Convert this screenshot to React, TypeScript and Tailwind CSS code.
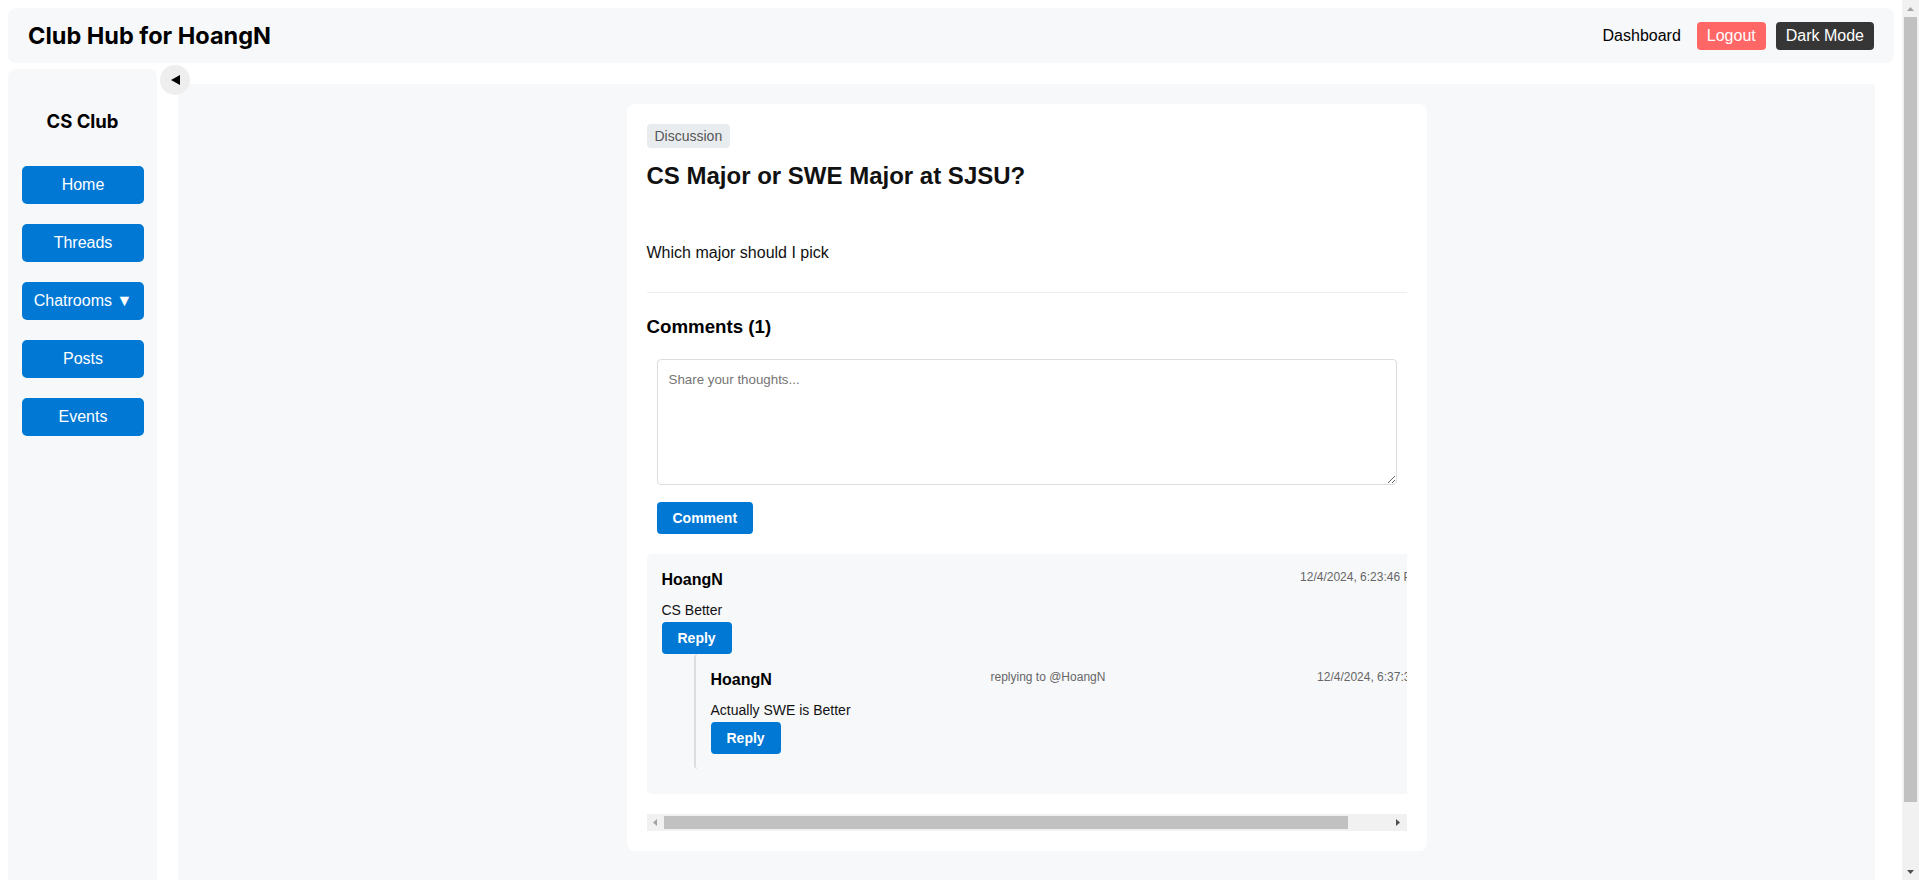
function Arrow({ dir, color }: { dir: "up" | "down" | "left" | "right"; color: string }) {
  const pts: Record<string, string> = {
    up: "0,4 3.5,0 7,4",
    down: "0,0 7,0 3.5,4",
    left: "4,0 4,7 0,3.5",
    right: "0,0 0,7 4,3.5",
  };
  const vertical = dir === "up" || dir === "down";
  return (
    <svg width={vertical ? 7 : 4} height={vertical ? 4 : 7} viewBox={vertical ? "0 0 7 4" : "0 0 4 7"}>
      <polygon points={pts[dir]} fill={color} />
    </svg>
  );
}

export default function App() {
  const navItems = ["Home", "Threads", "Chatrooms ▼", "Posts", "Events"];
  return (
    <div className="flex h-screen overflow-hidden bg-white font-['Liberation_Sans',Arial,sans-serif] text-black">
      <div className="min-w-0 flex-1 p-2">
        <header className="flex h-[55px] items-center justify-between rounded-lg bg-[#f7f8fa] px-5">
          <h1 className="font-['Inter',sans-serif] text-[23.5px] font-bold leading-[29px]">Club Hub for HoangN</h1>
          <div className="flex items-center">
            <a className="mr-4 text-[16px] leading-[18px]">Dashboard</a>
            <button className="h-[28px] rounded-[4px] bg-[#ff6666] px-[10px] text-[16px] text-white">Logout</button>
            <button className="ml-[10px] h-[28px] rounded-[4px] bg-[#363636] px-[10px] text-[16px] text-white">
              Dark Mode
            </button>
          </div>
        </header>

        <div className="relative mt-[6px] flex min-h-[871px]">
          <aside className="w-[149px] shrink-0 rounded-lg bg-[#f7f8fa] pt-[41px]">
            <h2 className="text-center font-['Inter',sans-serif] text-[18.5px] font-bold leading-[22px]">CS Club</h2>
            <nav className="mt-[34px] flex flex-col gap-5 px-[14px]">
              {navItems.map((n) => (
                <button
                  key={n}
                  className="h-[38px] w-[122px] rounded-[5px] bg-[#0078d4] text-center text-[16px] text-white"
                >
                  {n}
                </button>
              ))}
            </nav>
          </aside>

          <button className="absolute left-[152px] top-[-4px] flex h-[30px] w-[30px] items-center justify-center rounded-full bg-[#eeeeee]">
            <svg width="9" height="10" viewBox="0 0 9 10">
              <polygon points="0,5 9,0 9,10" fill="#000" />
            </svg>
          </button>

          <main className="ml-[21px] mr-[19px] mt-[15px] min-w-0 flex-1 bg-[#f7f8fa] pt-5">
            <article className="mx-auto w-[800px] rounded-lg bg-white p-5">
              <span className="inline-block rounded-[4px] bg-[#e9ecef] px-2 py-1 text-[14px] leading-4 text-[#555]">
                Discussion
              </span>
              <h2 className="mt-[14px] text-[24px] font-bold leading-[28px] text-[#111]">
                CS Major or SWE Major at SJSU?
              </h2>
              <p className="mt-[54px] text-[16px] leading-[18px] text-[#111]">Which major should I pick</p>
              <div className="mt-[30px] h-px bg-[#eeeeee]" />
              <h3 className="mb-[11px] mt-[23px] text-[18.72px] font-bold leading-[22px]">Comments (1)</h3>

              <div className="p-[10px]">
                <textarea
                  placeholder="Share your thoughts..."
                  className="block h-[126px] w-full rounded-[4px] border border-[#dddddd] bg-white px-[11px] pb-[10px] pt-[12px] text-[13.33px] leading-[15px] placeholder:text-[#757575]"
                />
                <button className="mt-[17px] h-8 rounded-[4px] bg-[#0078d4] px-4 text-[14px] font-bold text-white">
                  Comment
                </button>
              </div>

              <div className="mt-[10px]">
                <div className="overflow-hidden">
                  <div className="mb-5 box-content w-full rounded-[5px] bg-[#f7f8fa] p-[15px]">
                    <div className="mb-[15px] flex h-[18px] items-start justify-between">
                      <span className="pt-[2px] text-[16px] font-bold leading-[18px]">HoangN</span>
                      <span className="mt-px whitespace-nowrap text-[12px] leading-[14px] text-[#666]">
                        12/4/2024, 6:23:46 PM
                      </span>
                    </div>
                    <p className="mb-[4px] text-[14px] leading-4 text-[#111]">CS Better</p>
                    <button className="h-8 rounded-[4px] bg-[#0078d4] px-4 text-[14px] font-bold text-white">
                      Reply
                    </button>

                    <div className="mb-[10px] ml-8 w-full rounded-[4px] border-l-2 border-[#dddddd] p-[15px]">
                      <div className="mb-[15px] flex h-[18px] items-start justify-between">
                        <span className="pt-[2px] text-[16px] font-bold leading-[18px]">HoangN</span>
                        <span className="ml-[7px] mt-px whitespace-nowrap text-[12px] leading-[14px] text-[#666]">
                          replying to @HoangN
                        </span>
                        <span className="mt-px whitespace-nowrap text-[12px] leading-[14px] text-[#666]">
                          12/4/2024, 6:37:31 PM
                        </span>
                      </div>
                      <p className="mb-[4px] text-[14px] leading-4 text-[#111]">Actually SWE is Better</p>
                      <button className="h-8 rounded-[4px] bg-[#0078d4] px-4 text-[14px] font-bold text-white">
                        Reply
                      </button>
                    </div>
                  </div>
                </div>
                {/* horizontal scrollbar */}
                <div className="flex h-[17px] bg-[#f1f1f1]">
                  <div className="flex w-[17px] items-center justify-center">
                    <Arrow dir="left" color="#a3a3a3" />
                  </div>
                  <div className="flex-1 py-[2px]">
                    <div className="h-full w-[684px] bg-[#c1c1c1]" />
                  </div>
                  <div className="flex w-[17px] items-center justify-center">
                    <Arrow dir="right" color="#505050" />
                  </div>
                </div>
              </div>
            </article>
          </main>
        </div>
      </div>

      {/* vertical page scrollbar */}
      <div className="flex w-[17px] shrink-0 flex-col bg-[#f1f1f1]">
        <div className="flex h-[17px] items-center justify-center">
          <Arrow dir="up" color="#a3a3a3" />
        </div>
        <div className="flex-1 px-[2px]">
          <div className="h-[785px] w-full bg-[#c1c1c1]" />
        </div>
        <div className="flex h-[17px] items-center justify-center">
          <Arrow dir="down" color="#505050" />
        </div>
      </div>
    </div>
  );
}
